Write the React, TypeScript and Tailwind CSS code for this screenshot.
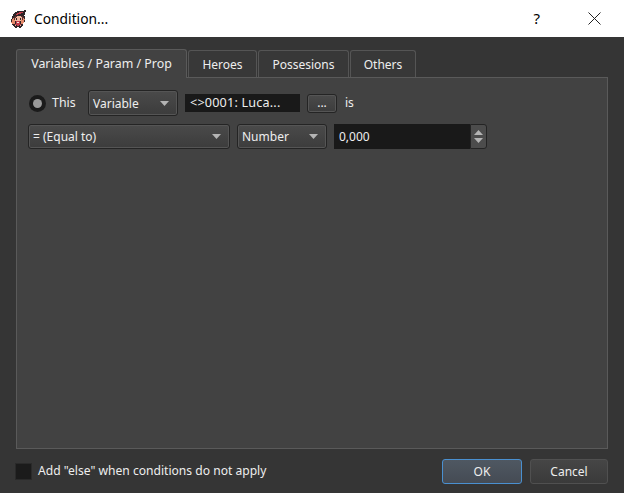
const font = "[font-family:'Noto_Sans',sans-serif]"

// small pixel sprite for the window icon, one char per pixel
const sprite = [
  '..............kk..',
  '.......kkkkkkkkk..',
  '.....kkkkrrrrkk...',
  '....kkkrrrrkkkk...',
  '...kkkrrkkkkkkk...',
  '...kkkkkkkkkkk....',
  '..kkkbbppppbbkk...',
  '..kkbbppppppbbk...',
  '..kobpkpppkpbok...',
  '.koobpkpppkpboo...',
  '.koooppppppoook...',
  '.koookrrrrkoook...',
  '.ooookrwwrkooo....',
  '..oookrrrrkoo.....',
  '..kkkrrrrrrkk.....',
  '...kkpkrrkpkk.....',
  '....kkkkkkkk......',
  '.....kk..kk.......',
]

const spriteColors: Record<string, string> = {
  k: '#2f2528',
  r: '#c23b4a',
  b: '#5c3030',
  p: '#f3b9a0',
  o: '#e58a6a',
  w: '#f0e4e0',
}

function TitleIcon() {
  return (
    <svg width="18" height="18" viewBox="0 0 18 18" shapeRendering="crispEdges">
      {sprite.flatMap((row, y) =>
        row.split('').map((c, x) =>
          c === '.' ? null : <rect key={`${x}-${y}`} x={x} y={y} width="1" height="1" fill={spriteColors[c]} />,
        ),
      )}
    </svg>
  )
}

function Caret() {
  return (
    <svg width="9" height="5" viewBox="0 0 9 5">
      <path d="M0 0h9L4.5 5z" fill="#b4b4b4" />
    </svg>
  )
}

function Select({ label, className, labelClass = '' }: { label: string; className: string; labelClass?: string }) {
  return (
    <div
      className={`flex items-center justify-between rounded-[3px] border border-[#242424] bg-gradient-to-b from-[#4a4a4a] to-[#3c3c3c] pl-1 pr-2 shadow-[inset_0_0_0_1px_#555] ${className}`}
    >
      <span className={labelClass}>{label}</span>
      <Caret />
    </div>
  )
}

function Tab({ label, active, className }: { label: string; active?: boolean; className: string }) {
  return (
    <div
      className={
        active
          ? `flex h-[29px] items-center justify-center rounded-t-[3px] border border-b-0 border-[#5a5a5a] bg-[#424242] text-[12.4px] ${className}`
          : `mt-px flex h-[27px] items-center justify-center rounded-t-[3px] border border-b-0 border-[#555] bg-[#383838] pt-0.5 ${className}`
      }
    >
      {label}
    </div>
  )
}

export default function App() {
  return (
    <div className={`${font} flex h-[493px] w-[624px] flex-col overflow-hidden bg-[#353535] text-[12px] text-[#eeeeee]`}>
      {/* Title bar */}
      <div className="flex h-[37px] items-center bg-white pl-[10px] text-black">
        <TitleIcon />
        <span className="ml-[6px] pt-0.5 text-[13.8px]">Condition...</span>
        <span className="ml-auto text-[15px]">?</span>
        <svg className="ml-[48px] mr-[23px]" width="13" height="13" viewBox="0 0 13 13">
          <path d="M.5.5l12 12M12.5.5l-12 12" stroke="#222" fill="none" />
        </svg>
      </div>

      <div className="flex flex-1 flex-col px-4 pt-3">
        {/* Tabs */}
        <div className="relative z-10 flex h-[29px] items-start gap-px">
          <Tab label="Variables / Param / Prop" active className="w-[171px]" />
          <Tab label="Heroes" className="w-[69px]" />
          <Tab label="Possesions" className="w-[91px]" />
          <Tab label="Others" className="w-[66px]" />
        </div>

        {/* Pane */}
        <div className="-mt-px h-[372px] w-[592px] border border-[#5a5a5a] bg-[#424242] pl-[11px] pt-3">
          <div className="flex h-[26px] items-center">
            <div className="ml-px flex h-[17px] w-[17px] items-center justify-center rounded-full bg-[#1b1b1b]">
              <div className="h-[9px] w-[9px] rounded-full bg-[#9a9a9a]" />
            </div>
            <span className="ml-[6px] w-[36px] text-[12.4px]">This</span>
            <Select label="Variable" labelClass="pt-0.5" className="h-[26px] w-[90px]" />
            <div className="ml-[7px] flex h-[18px] w-[115px] items-center bg-[#191919] pl-[5px] text-[12.6px] tracking-[0.2px]">
              {'<>0001: Luca...'}
            </div>
            <div className="ml-[7px] flex h-[19px] w-[30px] items-center justify-center rounded-[3px] border border-[#242424] bg-gradient-to-b from-[#4a4a4a] to-[#3c3c3c] shadow-[inset_0_0_0_1px_#555]">
              ...
            </div>
            <span className="ml-2">is</span>
          </div>

          <div className="mt-[8px] flex h-[25px] items-center">
            <Select label="= (Equal to)" className="h-[25px] w-[202px]" />
            <Select label="Number" className="ml-[7px] h-[25px] w-[90px]" />
            <div className="ml-[7px] flex h-[25px] w-[153px]">
              <div className="flex flex-1 items-center bg-[#191919] pl-[5px]">0,000</div>
              <div className="flex w-[17px] flex-col items-center justify-center gap-[3px] rounded-r-[3px] border border-[#242424] bg-[#4c4c4c]">
                <svg width="9" height="5" viewBox="0 0 9 5">
                  <path d="M0 5h9L4.5 0z" fill="#b4b4b4" />
                </svg>
                <Caret />
              </div>
            </div>
          </div>
        </div>

        {/* Footer */}
        <div className="mt-[10px] flex h-[25px] items-center">
          <div className="-ml-px h-[17px] w-[17px] border border-[#2a2a2a] bg-[#1b1b1b]" />
          <span className="ml-[6px] text-[12.1px]">Add "else" when conditions do not apply</span>
          <div className="ml-auto flex h-[25px] w-[80px] items-center justify-center rounded-[3px] border border-[#4a90d0] bg-gradient-to-b from-[#4f5862] to-[#454b54]">
            OK
          </div>
          <div className="ml-2 flex h-[25px] w-[78px] items-center justify-center rounded-[3px] border border-[#505050] bg-gradient-to-b from-[#464646] to-[#3a3a3a]">
            Cancel
          </div>
        </div>
      </div>
    </div>
  )
}
